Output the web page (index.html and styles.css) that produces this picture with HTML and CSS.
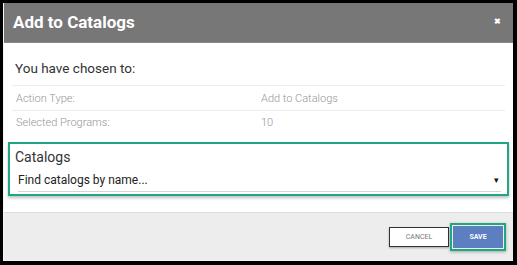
FILE: index.html
```html
<!DOCTYPE html>
<html lang="en">
<head>
    <meta charset="UTF-8">
    <meta name="viewport" content="width=device-width, initial-scale=1.0">
    <title>Add to Catalogs</title>
    <link rel="stylesheet" href="styles.css">
</head>
<body>
    <div class="modal">
        <div class="modal-header">
            <p class="modal-title">Add to Catalogs</p>
            <span class="close">&#x2716;</span>
        </div>

        <div class="modal-body">
            <p class="intro">You have chosen to:</p>
            <div class="summary-row">
                <span class="label">Action Type:</span>
                <span class="value">Add to Catalogs</span>
            </div>
            <div class="summary-row">
                <span class="label">Selected Programs:</span>
                <span class="value">10</span>
            </div>

            <div class="highlight">
                <p class="field-title">Catalogs</p>
                <div class="select">
                    <span>Find catalogs by name...</span>
                    <span class="caret">&#9662;</span>
                </div>
            </div>
        </div>

        <div class="modal-footer">
            <button class="btn-cancel">CANCEL</button>
            <div class="save-wrap">
                <button class="btn-save">SAVE</button>
            </div>
        </div>
    </div>
</body>
</html>
```

FILE: styles.css
```css
body {
    margin: 0;
    padding: 3px 4px 4px 3px;
    background-color: #000000;
    font-family: Roboto, "Liberation Sans", sans-serif;
    height: 258px;
}

p {
    margin: 0;
}

.modal {
    height: 258px;
    background-color: #ffffff;
    display: flex;
    flex-direction: column;
    border-left: 1px solid #f4f4f4;
    border-bottom: 1px solid #f4f4f4;
    box-sizing: border-box;
}

.modal-header {
    height: 40px;
    background-color: #777777;
    border-bottom: 1px solid #8a8a8a;
    box-sizing: border-box;
    display: flex;
    align-items: center;
    justify-content: space-between;
    padding: 0 12px 0 9px;
}

.modal-title {
    color: #ffffff;
    font-size: 17px;
    font-weight: bold;
    margin-top: -2px;
}

.close {
    color: #ffffff;
    font-size: 8px;
    font-weight: bold;
    margin-top: -2px;
}

.modal-body {
    flex: 1;
    padding: 0 8px 0 4px;
}

.intro {
    height: 43px;
    box-sizing: border-box;
    padding: 17px 0 0 3px;
    font-size: 13.5px;
    line-height: 16px;
    color: #333333;
    border-bottom: 1px solid #e8eef2;
    margin-left: 4px;
}

.summary-row {
    height: 24px;
    box-sizing: border-box;
    display: flex;
    align-items: center;
    margin-left: 4px;
    padding-left: 4px;
    font-size: 11px;
    font-weight: 300;
    color: #959595;
}

.summary-row + .summary-row {
    border-top: 1px solid #e8eef2;
}

.label {
    width: 245px;
}

.highlight {
    margin-top: 8px;
    border: 2.5px solid #1fa784;
    height: 54px;
    box-sizing: border-box;
    padding: 5px 6px 0 5px;
    box-shadow: 0 2px 3px rgba(0, 0, 0, 0.25);
    margin-right: -4px;
}

.field-title {
    font-size: 14px;
    color: #333333;
    line-height: 16px;
}

.select {
    margin: 8px 0 0 3px;
    display: flex;
    justify-content: space-between;
    align-items: center;
    font-size: 12px;
    color: #222222;
    padding-bottom: 4px;
    border-bottom: 1px solid #d6d6d6;
}

.caret {
    font-size: 9px;
    color: #111111;
    margin-right: 2px;
}

.modal-footer {
    height: 48px;
    background-color: #ededed;
    border-top: 1px solid #dddddd;
    box-sizing: border-box;
    display: flex;
    align-items: center;
    justify-content: flex-end;
    padding-right: 7px;
}

.btn-cancel {
    width: 60px;
    height: 20px;
    background-color: #ffffff;
    border: 1.5px solid #333333;
    box-shadow: 0 1px 2px rgba(0, 0, 0, 0.3);
    font-family: Roboto, "Liberation Sans", sans-serif;
    font-size: 7px;
    color: #777777;
    padding: 0;
    margin-right: 1px;
}

.save-wrap {
    border: 2.5px solid #1fa784;
    padding: 1px;
    box-shadow: 0 1px 3px rgba(0, 0, 0, 0.3);
}

.btn-save {
    display: block;
    width: 50px;
    height: 22px;
    background-color: #5b7fbf;
    border: none;
    font-family: Roboto, "Liberation Sans", sans-serif;
    font-size: 7px;
    font-weight: bold;
    color: #ffffff;
    padding: 0;
}
```
